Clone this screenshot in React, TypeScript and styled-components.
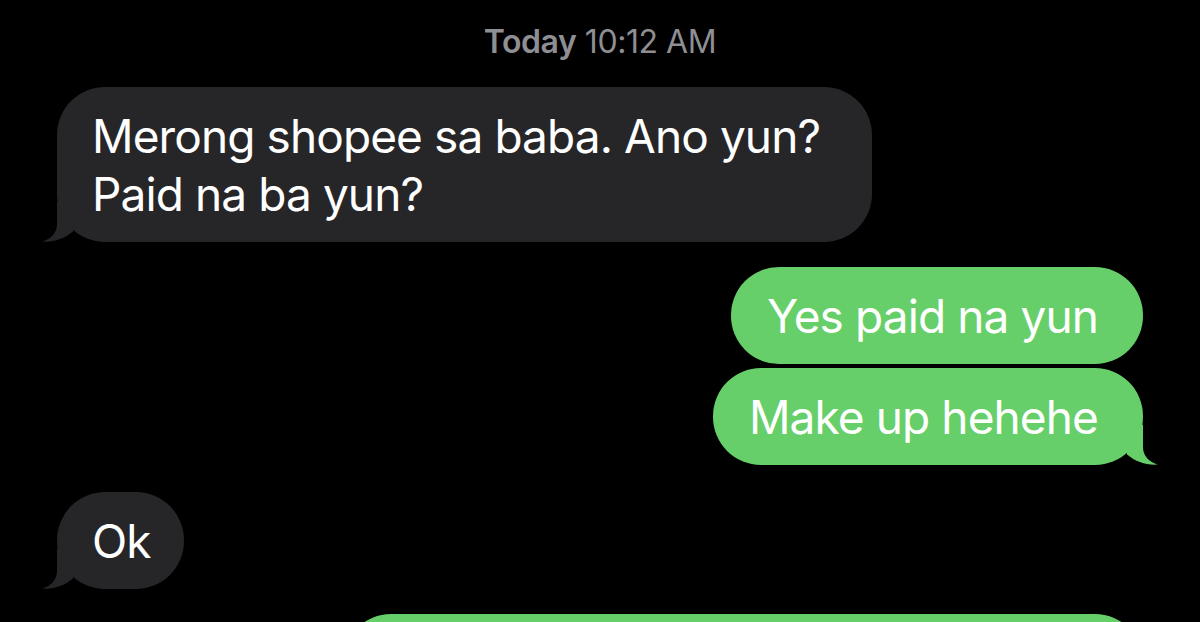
import styled, { createGlobalStyle } from "styled-components"

type Side = "in" | "out"

interface Message {
  id: number
  side: Side
  text: string
  tail: boolean
  gap: number
  // only for the bubble that runs off the bottom of the screen
  width?: number
}

const messages: Message[] = [
  { id: 1, side: "in", text: "Merong shopee sa baba. Ano yun? Paid na ba yun?", tail: true, gap: 25 },
  { id: 2, side: "out", text: "Yes paid na yun", tail: false, gap: 25 },
  { id: 3, side: "out", text: "Make up hehehe", tail: true, gap: 4 },
  { id: 4, side: "in", text: "Ok", tail: true, gap: 27 },
  { id: 5, side: "out", text: "", tail: true, gap: 25, width: 812 },
]

const GlobalStyle = createGlobalStyle`
  html, body {
    margin: 0;
    padding: 0;
    background: #000;
    overflow: hidden;
  }
  body {
    font-family: Inter, "Noto Sans", "Liberation Sans", sans-serif;
    -webkit-font-smoothing: antialiased;
  }
`

const Thread = styled.div`
  display: flex;
  flex-direction: column;
  padding: 0 57px;
  height: 622px;
  overflow: hidden;
`

const Timestamp = styled.div`
  padding-top: 22px;
  text-align: center;
  font-size: 32px;
  line-height: 40px;
  letter-spacing: -0.45px;
  color: #8e8e93;

  b {
    font-weight: 600;
  }
`

const Row = styled.div<{ $side: Side; $gap: number }>`
  display: flex;
  justify-content: ${(p) => (p.$side === "in" ? "flex-start" : "flex-end")};
  margin-top: ${(p) => p.$gap}px;
  flex-shrink: 0;
`

const Bubble = styled.div<{ $side: Side }>`
  position: relative;
  max-width: ${(p) => (p.$side === "in" ? 815 : 800)}px;
  min-height: 97px;
  box-sizing: border-box;
  padding: ${(p) => (p.$side === "in" ? "19.5px 33px 19.5px 35px" : "19.5px 45px 19.5px 36px")};
  border-radius: 48px;
  background: ${(p) => (p.$side === "in" ? "#262629" : "#66cf69")};
  color: #fff;
  font-size: 46px;
  line-height: 58px;
  letter-spacing: -0.9px;
`

const Tail = styled.svg<{ $side: Side }>`
  position: absolute;
  bottom: 0;
  width: 40px;
  height: 40px;
  ${(p) => (p.$side === "in" ? "left: -15px;" : "right: -15px; transform: scaleX(-1);")}
`

function BubbleTail({ side, color }: { side: Side; color: string }) {
  return (
    <Tail $side={side} viewBox="0 0 40 40">
      <path d="M15 0 L15 22 C15 31 9 37 0 39.5 C11 40.5 22 37 31 29.5 L31 0 Z" fill={color} />
    </Tail>
  )
}

export default function App() {
  return (
    <>
      <GlobalStyle />
      <Thread>
        <Timestamp>
          <b>Today</b> 10:12 AM
        </Timestamp>
        {messages.map((m) => (
          <Row key={m.id} $side={m.side} $gap={m.gap}>
            <Bubble $side={m.side} style={m.width ? { width: m.width } : undefined}>
              {m.text}
              {m.tail && <BubbleTail side={m.side} color={m.side === "in" ? "#262629" : "#66cf69"} />}
            </Bubble>
          </Row>
        ))}
      </Thread>
    </>
  )
}
